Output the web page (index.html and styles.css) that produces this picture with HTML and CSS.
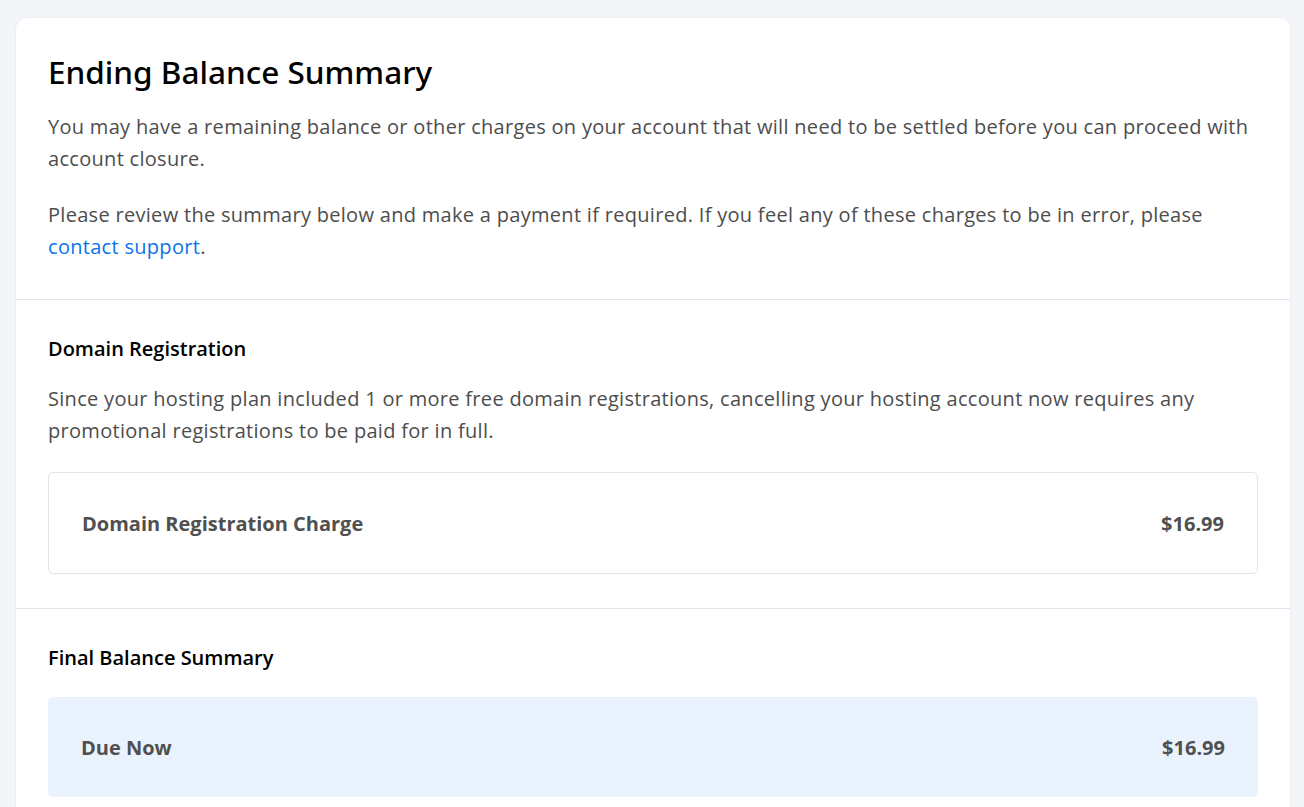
FILE: index.html
```html
<!DOCTYPE html>
<html lang="en">
<head>
<meta charset="utf-8">
<title>Ending Balance Summary</title>
<link rel="stylesheet" href="styles.css">
</head>
<body>
<main class="page">
  <section class="card">
    <div class="section section-intro">
      <h1 class="title">Ending Balance Summary</h1>
      <p class="text">You may have a remaining balance or other charges on your account that will need to be settled before you can proceed with account closure.</p>
      <p class="text">Please review the summary below and make a payment if required. If you feel any of these charges to be in error, please <a class="link" href="#">contact support</a>.</p>
    </div>
    <div class="section">
      <h2 class="subtitle">Domain Registration</h2>
      <p class="text">Since your hosting plan included 1 or more free domain registrations, cancelling your hosting account now requires any promotional registrations to be paid for in full.</p>
      <div class="row row-outline">
        <span class="row-label">Domain Registration Charge</span>
        <span class="row-value">$16.99</span>
      </div>
    </div>
    <div class="section">
      <h2 class="subtitle">Final Balance Summary</h2>
      <div class="row row-fill">
        <span class="row-label">Due Now</span>
        <span class="row-value">$16.99</span>
      </div>
    </div>
  </section>
</main>
</body>
</html>
```
FILE: styles.css
```css
* { box-sizing: border-box; }
html, body { margin: 0; padding: 0; }
body {
  background: #f4f5f9;
  font-family: "Open Sans", "Lato", sans-serif;
  color: #4d4d4d;
  height: 807px;
  overflow: hidden;
}
.page {
  padding: 17px 13px 0 15px;
}
.card {
  background: #fff;
  border-radius: 12px;
  border: 1px solid #eceef3;
  min-height: 820px;
}
.section {
  padding: 36px 32px 34px;
  border-top: 1px solid #e3e4e8;
}
.section:first-child { border-top: 0; padding-top: 34px; }
.section-intro { padding-bottom: 36px; }
.title {
  margin: 0 0 19px;
  font-family: "Noto Sans", sans-serif;
  font-weight: 500;
  font-size: 31.5px;
  line-height: 40px;
  color: #000;
}
.text {
  margin: 0;
  font-size: 20px;
  line-height: 32px;
  letter-spacing: 0.3px;
  color: #4d4d4d;
}
.text + .text { margin-top: 24px; }
.link { color: #0a73e8; text-decoration: none; }
.subtitle {
  margin: 0 0 21px;
  font-size: 20px;
  line-height: 26px;
  font-weight: 600;
  color: #000;
}
.row {
  display: flex;
  justify-content: space-between;
  align-items: center;
  padding: 0 33px;
  border-radius: 5px;
  font-weight: 700;
  font-size: 20px;
  color: #505050;
}
.row-outline {
  margin-top: 25px;
  height: 102px;
  border: 1px solid #e3e4e8;
}
.row-fill {
  margin-top: 26px;
  background: #eaf2fd;
  height: 100px;
}
```
